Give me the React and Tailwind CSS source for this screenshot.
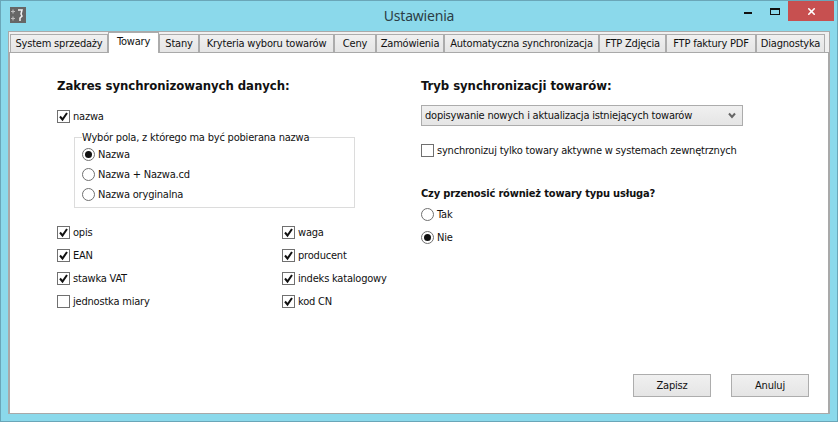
import { X } from 'lucide-react';

const font = "font-['DejaVu_Sans_Condensed','Noto_Sans',sans-serif]";

const tabs = [
  { label: 'System sprzedaży', w: 'w-[98px]' },
  { label: 'Towary', w: 'w-[51px]', active: true },
  { label: 'Stany', w: 'w-[40px]' },
  { label: 'Kryteria wyboru towarów', w: 'w-[135px]' },
  { label: 'Ceny', w: 'w-[42px]' },
  { label: 'Zamówienia', w: 'w-[68px]' },
  { label: 'Automatyczna synchronizacja', w: 'w-[155px]' },
  { label: 'FTP Zdjęcia', w: 'w-[67px]' },
  { label: 'FTP faktury PDF', w: 'w-[90px]' },
  { label: 'Diagnostyka', w: 'w-[69px]' },
];

function Check({ checked, label, className = '' }) {
  return (
    <div className={`flex items-center h-[13px] ${className}`}>
      <span className="w-[13px] h-[13px] shrink-0 border border-[#707070] bg-white flex items-center justify-center">
        {checked && (
          <svg width="11" height="11" viewBox="0 0 11 11">
            <path d="M2 5.5 L4.5 8.5 L9 2" fill="none" stroke="#111" strokeWidth="2" />
          </svg>
        )}
      </span>
      <span className="ml-[3px] whitespace-nowrap">{label}</span>
    </div>
  );
}

function Radio({ checked, label, className = '' }) {
  return (
    <div className={`flex items-center h-[13px] ${className}`}>
      <span className="w-[13px] h-[13px] shrink-0 rounded-full border border-[#707070] bg-white flex items-center justify-center">
        {checked && <span className="w-[7px] h-[7px] rounded-full bg-[#111]" />}
      </span>
      <span className="ml-[3px] whitespace-nowrap">{label}</span>
    </div>
  );
}

function Button({ label }) {
  return (
    <button className="w-[78px] h-[23px] border border-[#adadad] bg-gradient-to-b from-[#f0f0f0] to-[#e5e5e5] text-[#111]">
      {label}
    </button>
  );
}

export default function App() {
  return (
    <div className={`${font} w-[838px] h-[422px] overflow-hidden bg-[#8bd9eb] border border-[#6aa6b8] flex flex-col text-[11px] leading-[13px] tracking-[-0.2px] text-[#111]`}>
      <header className="h-[30px] shrink-0 flex items-start">
        <div className="w-[110px] shrink-0">
          <div className="ml-[9px] mt-[6px] w-4 h-4 bg-[#666]">
            <svg width="16" height="16" viewBox="0 0 16 16">
              <path d="M3 2.5v4M1 4.5h4M3 9.5v4M1 11.5h4" stroke="#bbb" strokeWidth="1.2" fill="none" />
              <path d="M8 3h4l-1 4 1 2-2 2v3" stroke="#f2f2f2" strokeWidth="1.5" fill="none" />
            </svg>
          </div>
        </div>
        <div className="flex-1 text-center font-['Noto_Sans',sans-serif] text-[14px] leading-[30px] text-[#2c3e46]">Ustawienia</div>
        <div className="w-[110px] shrink-0 flex items-start justify-end">
          <span className="mt-[11px] mr-[18px] w-[8px] h-[2px] bg-[#111]" />
          <span className="mt-[7px] mr-[8px] w-[10px] h-[7px] border border-t-2 border-[#111]" />
          <div className="mr-[3px] w-[46px] h-[20px] bg-[#c75050] flex items-center justify-center">
            <X className="w-[11px] h-[11px] text-white" strokeWidth={3.5} />
          </div>
        </div>
      </header>

      <main className="mx-[7px] mb-[7px] flex-1 bg-[#f0f0f0] border border-[#a9a9a9] border-b-0 flex flex-col">
        <nav className="h-[20px] pl-[1px] flex items-end shrink-0">
          {tabs.map((t) => (
            <div
              key={t.label}
              className={`${t.w} shrink-0 text-center whitespace-nowrap border-x border-t border-[#acacac] ${
                t.active
                  ? 'h-[21px] -mb-[1px] relative z-10 bg-white leading-[17px]'
                  : 'h-[18px] bg-gradient-to-b from-[#f0f0f0] to-[#e5e5e5] leading-[17px]'
              }`}
            >
              {t.label}
            </div>
          ))}
        </nav>

        <section className="flex-1 bg-white border border-[#a9a9a9] flex flex-col">
          <div className="flex flex-1">
            <div className="w-[363px] ml-[47px] shrink-0">
              <h2 className="mt-[25px] text-[13px] leading-[16px] font-bold tracking-[-0.05px]">Zakres synchronizowanych danych:</h2>
              <Check checked label="nazwa" className="mt-[16px]" />

              <fieldset className="mt-[8px] ml-[17px] w-[281px] h-[77px] border border-[#dcdcdc] pl-[7px]">
                <legend className="whitespace-nowrap leading-[13px] bg-white">Wybór pola, z którego ma być pobierana nazwa</legend>
                <Radio checked label="Nazwa" className="mt-[4px]" />
                <Radio label="Nazwa + Nazwa.cd" className="mt-[7px]" />
                <Radio label="Nazwa oryginalna" className="mt-[7px]" />
              </fieldset>

              <div className="mt-[18px] grid grid-cols-[225px_1fr] gap-y-[10px]">
                <Check checked label="opis" />
                <Check checked label="waga" />
                <Check checked label="EAN" />
                <Check checked label="producent" />
                <Check checked label="stawka VAT" />
                <Check checked label="indeks katalogowy" />
                <Check label="jednostka miary" />
                <Check checked label="kod CN" />
              </div>
            </div>

            <div className="w-[330px] ml-[1px]">
              <h2 className="mt-[25px] text-[13px] leading-[16px] font-bold tracking-[-0.05px]">Tryb synchronizacji towarów:</h2>
              <div className="mt-[11px] w-[322px] h-[21px] border border-[#acacac] bg-gradient-to-b from-[#f0f0f0] to-[#e5e5e5] flex items-center pl-[3px] pr-[6px]">
                <span className="flex-1 whitespace-nowrap">dopisywanie nowych i aktualizacja istniejących towarów</span>
                <svg width="8" height="7" viewBox="0 0 8 7">
                  <path d="M1 1.5 L4 5 L7 1.5" fill="none" stroke="#666" strokeWidth="2" />
                </svg>
              </div>
              <Check label="synchronizuj tylko towary aktywne w systemach zewnętrznych" className="mt-[18px]" />
              <h3 className="mt-[30px] font-bold leading-[14px] tracking-[-0.17px]">Czy przenosić również towary typu usługa?</h3>
              <Radio label="Tak" className="mt-[7px]" />
              <Radio checked label="Nie" className="mt-[10px]" />
            </div>
          </div>

          <div className="flex justify-end gap-[20px] pr-[19px] pb-[16px]">
            <Button label="Zapisz" />
            <Button label="Anuluj" />
          </div>
        </section>
      </main>
    </div>
  );
}
